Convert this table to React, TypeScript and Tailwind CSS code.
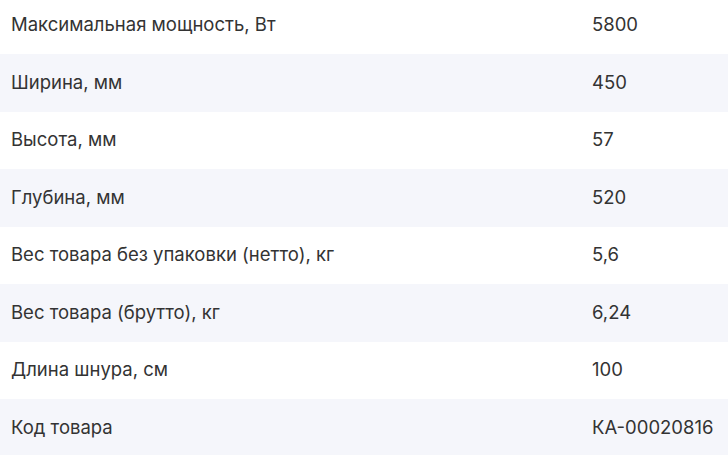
const specs = [
  { name: 'Максимальная мощность, Вт', value: '5800' },
  { name: 'Ширина, мм', value: '450' },
  { name: 'Высота, мм', value: '57' },
  { name: 'Глубина, мм', value: '520' },
  { name: 'Вес товара без упаковки (нетто), кг', value: '5,6' },
  { name: 'Вес товара (брутто), кг', value: '6,24' },
  { name: 'Длина шнура, см', value: '100' },
  { name: 'Код товара', value: 'КА-00020816' },
];

export default function App() {
  return (
    <div className="w-[728px] h-[455px] overflow-hidden bg-white" style={{ fontFamily: 'Inter, "Noto Sans", sans-serif' }}>
      <div className="-mt-[3.5px]">
        {specs.map((row, i) => (
          <div
            key={row.name}
            className={`flex items-center h-[57.5px] text-[18.5px] text-[#333333] ${i % 2 === 1 ? 'bg-[#f5f6fb]' : 'bg-white'}`}
          >
            <div className="w-[592px] pl-[11px] shrink-0">{row.name}</div>
            <div>{row.value}</div>
          </div>
        ))}
      </div>
    </div>
  );
}
